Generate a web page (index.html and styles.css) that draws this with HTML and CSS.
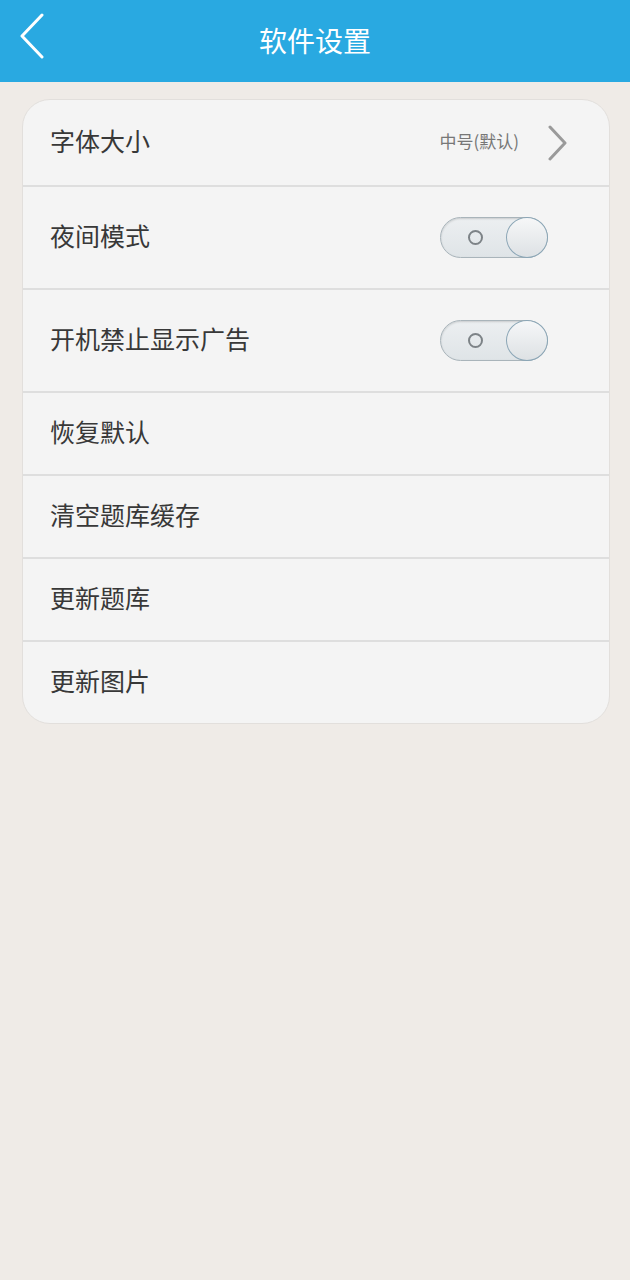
FILE: index.html
```html
<!DOCTYPE html>
<html lang="zh-CN">
<head>
  <meta charset="UTF-8" />
  <meta name="viewport" content="width=device-width, initial-scale=1.0"/>
  <title>软件设置</title>
  <link rel="stylesheet" href="styles.css">
</head>
<body>
  <header class="topbar">
    <a class="back" href="#">
      <svg width="28" height="46" viewBox="0 0 28 46">
        <path d="M24 2 L4 23 L24 44" fill="none" stroke="#fff" stroke-width="3" stroke-linecap="round" stroke-linejoin="round"/>
      </svg>
    </a>
    <h1>软件设置</h1>
  </header>

  <div class="settings">
    <div class="row first">
      <span class="label">字体大小</span>
      <span class="value">中号(默认)</span>
      <svg class="arrow" width="22" height="36" viewBox="0 0 22 36">
        <path d="M3 2 L18 18 L3 34" fill="none" stroke="#9a9a9a" stroke-width="3" stroke-linecap="round" stroke-linejoin="round"/>
      </svg>
    </div>
    <div class="row tall">
      <span class="label">夜间模式</span>
      <div class="switch"><span class="dot"></span><span class="knob"></span></div>
    </div>
    <div class="row tall">
      <span class="label">开机禁止显示广告</span>
      <div class="switch"><span class="dot"></span><span class="knob"></span></div>
    </div>
    <div class="row"><span class="label">恢复默认</span></div>
    <div class="row"><span class="label">清空题库缓存</span></div>
    <div class="row"><span class="label">更新题库</span></div>
    <div class="row"><span class="label">更新图片</span></div>
  </div>
</body>
</html>
```

FILE: styles.css
```css
* {
  box-sizing: border-box;
}

body {
  margin: 0;
  padding: 0;
  background: #efebe7;
  font-family: "Noto Sans CJK SC", "Noto Sans", sans-serif;
  color: #333;
  min-height: 1280px;
}

.topbar {
  height: 82px;
  background: #29a9e1;
  display: flex;
  align-items: center;
  justify-content: center;
  position: relative;
}

.topbar h1 {
  margin: 0 0 3px;
  font-size: 28px;
  font-weight: 400;
  color: #fff;
}

.back {
  position: absolute;
  left: 18px;
  top: 13px;
  display: block;
}

.settings {
  margin: 17px 20px 0 22px;
  background: #f4f4f4;
  border: 1px solid #e2dfdc;
  border-radius: 28px;
  overflow: hidden;
}

.row {
  height: 83px;
  display: flex;
  align-items: center;
  padding: 0 40px 0 27px;
  border-top: 2px solid #dedede;
}

.row.first {
  height: 85px;
  border-top: none;
}

.row.tall {
  height: 103px;
}

.label {
  flex: 1;
  font-size: 25px;
  color: #383838;
  padding-bottom: 6px;
}

.value {
  font-size: 17px;
  color: #777;
  margin-right: 28px;
  padding-bottom: 4px;
}

.arrow {
  display: block;
}

.switch {
  width: 108px;
  height: 41px;
  border-radius: 21px;
  border: 1px solid #a9b4ba;
  background: linear-gradient(#eceff1, #dfe4e7);
  position: relative;
  margin-right: 21px;
  box-shadow: inset 0 1px 2px rgba(0, 0, 0, 0.15);
}

.dot {
  position: absolute;
  left: 27px;
  top: 12px;
  width: 15px;
  height: 15px;
  border-radius: 50%;
  border: 2px solid #7d8387;
}

.knob {
  position: absolute;
  right: -1px;
  top: -1px;
  width: 42px;
  height: 41px;
  border-radius: 50%;
  border: 1px solid #8ba6b6;
  background: linear-gradient(#f6f7f8, #dde1e4);
}
```
